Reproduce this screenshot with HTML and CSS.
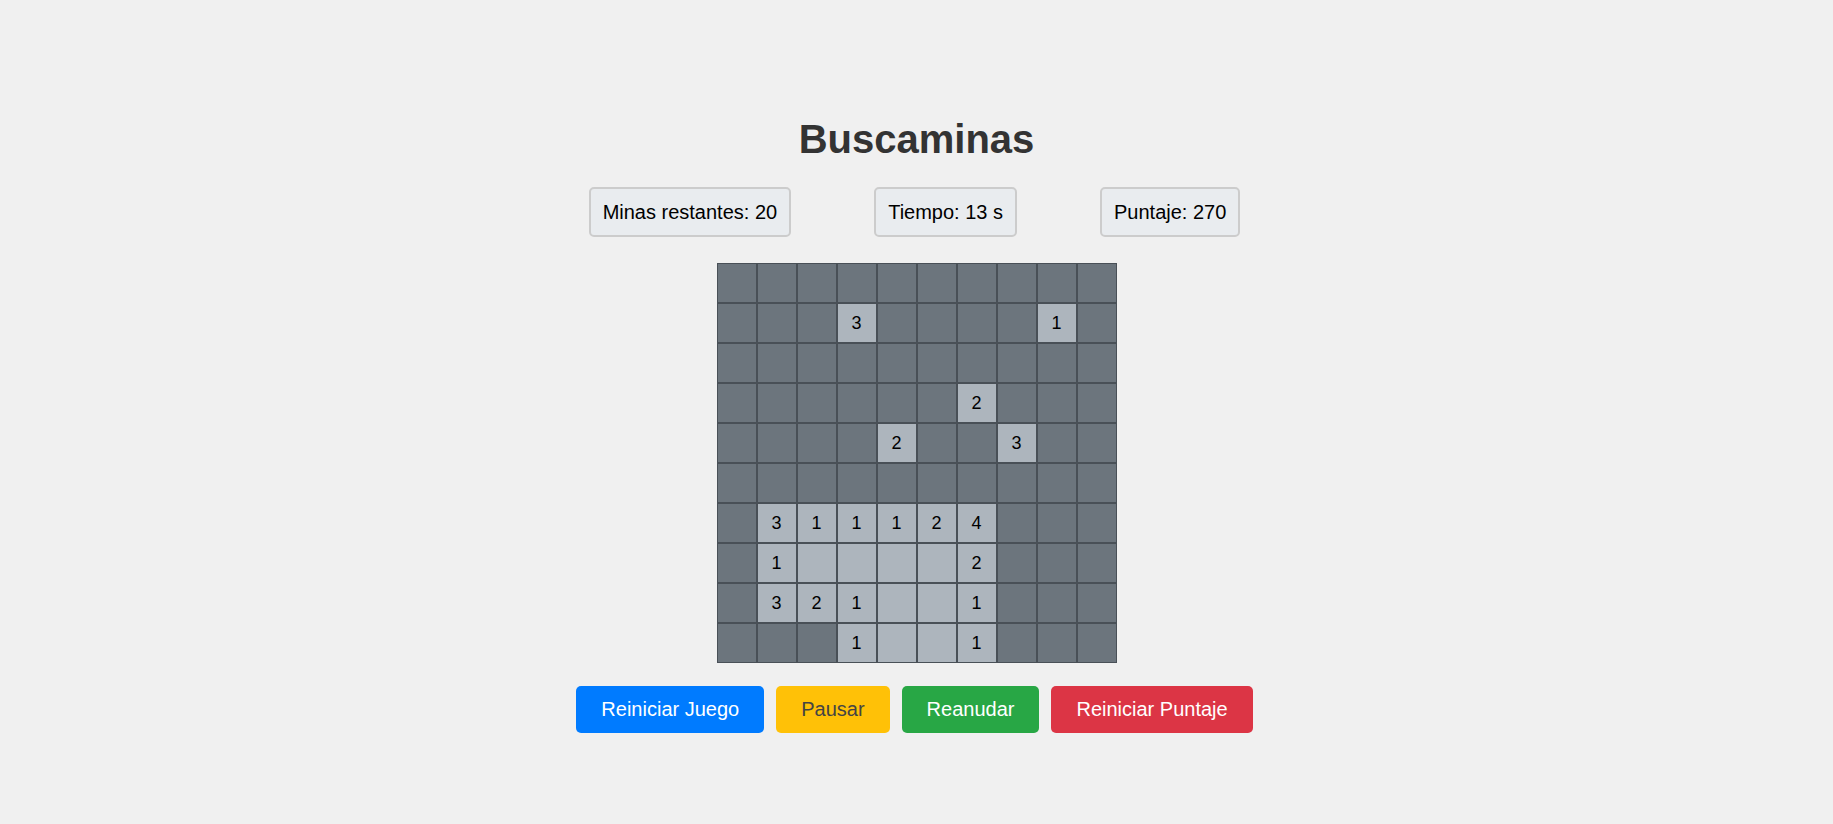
FILE: index.html
```html
<!DOCTYPE html>
<html lang="es">
<head>
<meta charset="utf-8">
<title>Buscaminas</title>
<link rel="stylesheet" href="styles.css">
</head>
<body>
<main class="game">
  <h1 class="title">Buscaminas</h1>
  <div class="stats">
    <div class="stat">Minas restantes: 20</div>
    <div class="stat">Tiempo: 13 s</div>
    <div class="stat">Puntaje: 270</div>
  </div>
  <div class="board">
    <div class="cell"></div><div class="cell"></div><div class="cell"></div><div class="cell"></div><div class="cell"></div><div class="cell"></div><div class="cell"></div><div class="cell"></div><div class="cell"></div><div class="cell"></div>

    <div class="cell"></div><div class="cell"></div><div class="cell"></div><div class="cell open">3</div><div class="cell"></div><div class="cell"></div><div class="cell"></div><div class="cell"></div><div class="cell open">1</div><div class="cell"></div>

    <div class="cell"></div><div class="cell"></div><div class="cell"></div><div class="cell"></div><div class="cell"></div><div class="cell"></div><div class="cell"></div><div class="cell"></div><div class="cell"></div><div class="cell"></div>

    <div class="cell"></div><div class="cell"></div><div class="cell"></div><div class="cell"></div><div class="cell"></div><div class="cell"></div><div class="cell open">2</div><div class="cell"></div><div class="cell"></div><div class="cell"></div>

    <div class="cell"></div><div class="cell"></div><div class="cell"></div><div class="cell"></div><div class="cell open">2</div><div class="cell"></div><div class="cell"></div><div class="cell open">3</div><div class="cell"></div><div class="cell"></div>

    <div class="cell"></div><div class="cell"></div><div class="cell"></div><div class="cell"></div><div class="cell"></div><div class="cell"></div><div class="cell"></div><div class="cell"></div><div class="cell"></div><div class="cell"></div>

    <div class="cell"></div><div class="cell open">3</div><div class="cell open">1</div><div class="cell open">1</div><div class="cell open">1</div><div class="cell open">2</div><div class="cell open">4</div><div class="cell"></div><div class="cell"></div><div class="cell"></div>

    <div class="cell"></div><div class="cell open">1</div><div class="cell open"></div><div class="cell open"></div><div class="cell open"></div><div class="cell open"></div><div class="cell open">2</div><div class="cell"></div><div class="cell"></div><div class="cell"></div>

    <div class="cell"></div><div class="cell open">3</div><div class="cell open">2</div><div class="cell open">1</div><div class="cell open"></div><div class="cell open"></div><div class="cell open">1</div><div class="cell"></div><div class="cell"></div><div class="cell"></div>

    <div class="cell"></div><div class="cell"></div><div class="cell"></div><div class="cell open">1</div><div class="cell open"></div><div class="cell open"></div><div class="cell open">1</div><div class="cell"></div><div class="cell"></div><div class="cell"></div>
  </div>
  <div class="actions">
    <button class="btn btn-blue">Reiniciar Juego</button>
    <button class="btn btn-yellow">Pausar</button>
    <button class="btn btn-green">Reanudar</button>
    <button class="btn btn-red">Reiniciar Puntaje</button>
  </div>
</main>
</body>
</html>
```

FILE: styles.css
```css
html, body {
  margin: 0;
  padding: 0;
}

body {
  background: #f0f0f0;
  font-family: "Liberation Sans", Arial, sans-serif;
  color: #000;
}

.game {
  display: flex;
  flex-direction: column;
  align-items: center;
  padding-top: 116px;
}

.title {
  margin: 0;
  font-size: 40px;
  line-height: 46px;
  font-weight: bold;
  color: #333;
}

.stats {
  display: flex;
  justify-content: center;
  gap: 83px;
  margin-top: 25px;
  padding-right: 4px;
}

.stat {
  font-size: 20px;
  line-height: 22px;
  padding: 12px;
  background: #e9ecef;
  border: 2px solid #cccccc;
  border-radius: 5px;
  color: #000;
}

.board {
  display: grid;
  grid-template-columns: repeat(10, 40px);
  grid-auto-rows: 40px;
  margin-top: 26px;
}

.cell {
  box-sizing: border-box;
  border: 1px solid #495057;
  background: #6c757d;
  display: flex;
  align-items: center;
  justify-content: center;
  font-size: 18px;
  color: #000;
}

.cell.open {
  background: #adb5bd;
}

.actions {
  display: flex;
  justify-content: center;
  gap: 12px;
  margin-top: 23px;
  padding-right: 4px;
}

.btn {
  font-family: "Liberation Sans", Arial, sans-serif;
  font-size: 20px;
  line-height: 23px;
  padding: 12px 25px;
  border: none;
  border-radius: 5px;
  color: #fff;
  cursor: pointer;
}

.btn-blue { background: #007bff; }
.btn-yellow { background: #ffc107; color: #444; }
.btn-green { background: #28a745; }
.btn-red { background: #dc3545; }
```
